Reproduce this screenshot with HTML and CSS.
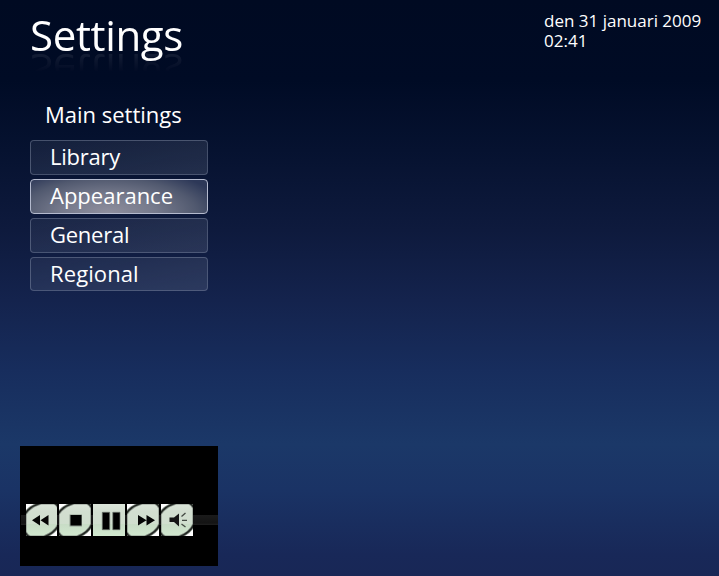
FILE: index.html
```html
<!DOCTYPE html>
<html lang="en">
<head>
<meta charset="utf-8">
<title>Settings</title>
<link rel="stylesheet" href="styles.css">
</head>
<body>
<div class="screen">
  <header class="header">
    <h1 class="title">Settings</h1>
    <div class="clock">den 31 januari 2009<br>02:41</div>
  </header>
  <h2 class="subtitle">Main settings</h2>
  <nav class="menu">
    <a class="item library">Library</a>
    <a class="item appearance active">Appearance</a>
    <a class="item general">General</a>
    <a class="item regional">Regional</a>
  </nav>
  <section class="player">
    <svg class="controls" width="198" height="32" viewBox="0 0 198 32">
      <defs>
        <linearGradient id="face" x1="0" y1="0" x2="0" y2="1">
          <stop offset="0" stop-color="#dce5da"/><stop offset=".25" stop-color="#d2ded0"/>
          <stop offset=".62" stop-color="#d0dece"/><stop offset=".63" stop-color="#c8dcc6"/>
          <stop offset="1" stop-color="#d2e9d0"/>
        </linearGradient>
        <linearGradient id="rail" x1="0" y1="0" x2="0" y2="1">
          <stop offset="0" stop-color="#1b1b1b"/><stop offset=".8" stop-color="#141414"/><stop offset="1" stop-color="#202020"/>
        </linearGradient>
        <symbol id="key" width="32" height="32" viewBox="0 0 32 32">
          <rect width="32" height="32" fill="#fff"/>
          <path d="M-1 10C2 5 8 1 15-1H28C31 0 32 2 33 4V20C31 25 26 30 18 33H4C1 32 0 30-1 28Z" fill="url(#face)" stroke="#858d85" stroke-width="3.2"/>
          <path d="M-1 10C2 5 8 1 15-1H28C31 0 32 2 33 4V20C31 25 26 30 18 33H4C1 32 0 30-1 28Z" fill="none" stroke="#222722" stroke-width="1.6"/>
        </symbol>
      </defs>
      <rect x="1" y="11" width="197" height="10" fill="url(#rail)"/>
      <svg x="6" width="31" height="32"><use href="#key"/><path d="M6 16.3L14 11v10.600zM14.500 16.300L22.500 11v10.600z" fill="#050505"/></svg>
      <svg x="39" width="32" height="32"><use href="#key"/><rect x="10.500" y="10.500" width="12.500" height="12" fill="#909b90"/><rect x="11.500" y="11" width="11" height="10.500" fill="#000"/></svg>
      <svg x="73" width="32" height="32"><rect width="32" height="32" fill="url(#face)"/><path d="M9.300 8.300h7.400v17.400H9.300zM19.800 8.300H27v17.400h-7.200z" fill="#000" stroke="#6d756d" stroke-width=".7"/></svg>
      <svg x="107" width="32" height="32"><use href="#key"/><path d="M11 11l8.500 5.300L11 21.600zM19.500 11l8.500 5.300-8.500 5.300z" fill="#050505"/></svg>
      <svg x="141" width="32" height="32"><use href="#key"/><path d="M8.500 13.500h4.500L18 9.500v13l-5-4.500H8.500z" fill="#151515"/><path d="M20.500 12.500L24.500 9M21 16.300h5M20.500 20L24.500 23" stroke="#434943" stroke-width="1.300"/></svg>
    </svg>
  </section>
</div>
</body>
</html>
```
FILE: styles.css
```css
* { box-sizing: border-box; }
body { margin: 0; }
.screen {
  width: 719px; height: 576px; overflow: hidden;
  display: flex; flex-direction: column;
  color: #fff; font-family: "Open Sans", "Noto Sans", sans-serif;
  background: linear-gradient(180deg, #000a22 0, #000b25 80px, #061230 150px, #0e1a3d 230px, #14234d 300px, #172d5d 370px, #1b3868 444px, #1a3365 490px, #182858 555px, #182756 576px);
}
h1, h2 { margin: 0; font-weight: 400; white-space: nowrap; }
.header { height: 96px; padding: 0 16px 0 30px; display: flex; justify-content: space-between; }
.title {
  height: 58px; margin-top: 7px; font-size: 42px; line-height: 56px; letter-spacing: -.35px;
  -webkit-box-reflect: below -25px linear-gradient(transparent 45%, rgba(255,255,255,.08) 77%, transparent 78%);
}
.clock { width: 159px; margin-top: 11px; font-size: 17px; line-height: 20px; white-space: nowrap; margin-left: auto; }
.subtitle { height: 44px; padding-left: 45px; font-size: 22px; line-height: 37px; }
.menu { display: flex; flex-direction: column; gap: 4px; width: 178px; margin-left: 30px; }
.item {
  height: 35px; padding-left: 19px; font-size: 22px; line-height: 31px; white-space: nowrap;
  border: 1px solid rgba(145,155,180,.38); border-radius: 4px;
  background: linear-gradient(165deg, rgba(150,160,180,.1), rgba(150,160,180,.19));
}
.library, .general { letter-spacing: -.25px; }
.regional { height: 34px; letter-spacing: .1px; }
.active {
  border-color: #b4bace;
  background: radial-gradient(ellipse 118px 46px at 44% 100%, #8e8e9d 0, #767a8c 40%, #51596f 75%, #2d3858 100%);
}
.player { width: 198px; height: 120px; margin: 155px 0 0 20px; padding-top: 58px; background: #000; }
.controls { display: block; }
```
